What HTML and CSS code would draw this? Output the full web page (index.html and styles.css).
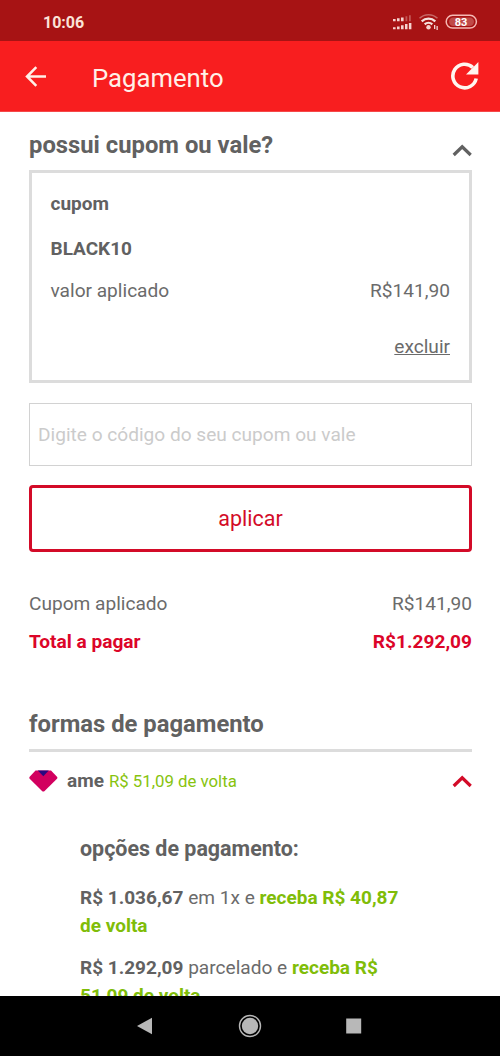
FILE: index.html
```html
<!DOCTYPE html>
<html lang="pt-BR">
<head>
<meta charset="utf-8">
<title>Pagamento</title>
<link rel="stylesheet" href="styles.css">
</head>
<body>
<div class="screen">
  <div class="status">
    <span class="time">10:06</span>
    <svg class="status-icons" width="88" height="18" viewBox="0 0 88 18">
      <g fill="#f6d3cf">
        <path d="M2 7h2.600v2.200H2zM6 6.300h2.600v2.900H6zM10 5.500h2.600v3.700H10z"/>
        <path d="M14.500 4.200h1.800v5h-1.800zM18 3.200h1.800v6H18z" opacity=".35"/>
        <path d="M2 15.200h2.600v2H2zM6 14.500h2.600v2.700H6zM10 13.200h2.600v4H10zM14 12h2.500v5.200H14zM17.900 11h2.500v6.200h-2.500z"/>
        <circle cx="37.500" cy="15.300" r="2.200"/>
        <path d="M43 13h1.300v4H43zM45.500 14h1.300v4h-1.300z"/>
      </g>
      <g fill="none" stroke="#f6e3df" stroke-width="2.200">
        <path d="M28.500 6.300a13 13 0 0 1 18 0" opacity=".4" stroke-width="1.500"/>
        <path d="M30.700 9.400a9.800 9.800 0 0 1 13.600 0"/>
        <path d="M33.700 12.400a5.500 5.500 0 0 1 7.600 0"/>
      </g>
      <rect x="55.200" y="3.300" width="30.200" height="12.800" rx="6.400" fill="#a71314" stroke="#f6b9b4" stroke-width="1.500"/>
      <rect x="58" y="5.500" width="25" height="8.500" rx="4.200" fill="#c04a48"/>
      <text class="battery" x="70" y="13.600" text-anchor="middle">83</text>
    </svg>
  </div>
  <header class="bar">
    <svg class="back" width="24" height="24" viewBox="0 0 24 24" fill="none" stroke="#fff0e8" stroke-width="2.500"><path d="M22 12.500H3.500M12.300 3.200L3 12.500l9.300 9.300"/></svg>
    <h1>Pagamento</h1>
    <svg class="reload" width="30" height="30" viewBox="0 0 30 30"><path d="M26.200 17.500A11.800 11.800 0 1 1 22.800 6.500" fill="none" stroke="#fff6f0" stroke-width="3.600"/><path d="M28.400 1v12.400H16z" fill="#fff6f0"/></svg>
  </header>
  <main>
    <div class="title-row">
      <h2>possui cupom ou vale?</h2>
      <svg class="chevron" width="20" height="14" viewBox="0 0 20 14"><path d="M1.700 12L10.200 3.800l8.500 8.200"/></svg>
    </div>
    <section class="coupon">
      <div class="line"><b>cupom</b></div>
      <div class="line code"><b>BLACK10</b></div>
      <div class="line value"><span>valor aplicado</span><span>R$141,90</span></div>
      <div class="line remove"><a>excluir</a></div>
    </section>
    <div class="field">Digite o código do seu cupom ou vale</div>
    <div class="apply">aplicar</div>
    <div class="line applied"><span>Cupom aplicado</span><span>R$141,90</span></div>
    <div class="line total"><b>Total a pagar</b><b>R$1.292,09</b></div>
    <h2 class="methods">formas de pagamento</h2>
    <div class="ame">
      <svg width="29" height="24" viewBox="0 0 29 24"><path d="M6.500 1.500h15.500l6 6.200q.8 1 0 2L15.600 22q-1.300 1.200-2.600 0L.7 9.700q-.8-1 0-2z" fill="#d2005f"/><path d="M8.800 1.500h11L14.300 7.200z" fill="#2a0880"/></svg>
      <b>ame</b><span class="cashback">R$ 51,09 de volta</span>
      <svg class="chevron red" width="20" height="14" viewBox="0 0 20 14"><path d="M1.700 12L10.200 3.800l8.500 8.200"/></svg>
    </div>
    <section class="options">
      <h3>opções de pagamento:</h3>
      <p><b>R$ 1.036,67</b> em 1x e <b class="green">receba R$ 40,87<br>de volta</b></p>
      <p><b>R$ 1.292,09</b> parcelado e <b class="green">receba R$<br>51,09 de volta</b></p>
    </section>
  </main>
  <nav class="android">
    <svg width="24" height="24" viewBox="0 0 24 24"><path d="M3 12L18 3.700v16.600z"/></svg>
    <svg width="24" height="24" viewBox="0 0 24 24"><circle cx="12" cy="12" r="8.200"/><circle cx="12" cy="12" r="10.500" fill="none" stroke="#b8b8b8" stroke-width="1.400"/></svg>
    <svg width="24" height="24" viewBox="0 0 24 24"><path d="M4.200 4.500h15v15h-15z"/></svg>
  </nav>
</div>
</body>
</html>
```
FILE: styles.css
```css
* { box-sizing: border-box; }
body { margin: 0; font-family: Roboto, sans-serif; font-size: 19.100px; color: #6b6b6b; background: #fff; }
h1, h2, h3, p { margin: 0; }
b { font-weight: 700; font-size: 19px; color: #616161; }
svg { flex: none; display: block; }
.screen { width: 500px; height: 1056px; display: flex; flex-direction: column; overflow: hidden; }
.status { height: 41px; flex: none; background: #a71314; display: flex; justify-content: space-between; padding: 12px 21px 0 43px; }
.time { font-size: 16px; line-height: 21px; font-weight: 700; color: #fbe3d8; }
.battery { font: 700 11px Roboto, sans-serif; fill: #fff; }
.bar { height: 71px; flex: none; background: #f81e1f; border-bottom: 1px solid #f5494a; display: flex; align-items: center; padding: 0 20px 0 24px; }
.bar h1 { font-size: 25.700px; line-height: 32px; font-weight: 400; color: #fff0e8; margin-left: 44px; padding-top: 3px; }
.reload { margin-left: auto; }
main { flex: 1; min-height: 0; overflow: hidden; padding: 18px 28px 0 29px; }
.title-row { display: flex; justify-content: space-between; height: 40px; }
h2 { font-size: 23.800px; line-height: 30px; font-weight: 700; color: #616161; }
.chevron { fill: none; stroke: #616161; stroke-width: 3.200; }
.title-row .chevron { margin-top: 13px; }
.red { stroke: #d30b28; margin-left: auto; }
.coupon { height: 213px; border: 3px solid #dcdcdc; padding: 19px 19px 0 18.500px; }
.line { display: flex; justify-content: space-between; line-height: 24px; height: 24px; }
.code { margin-top: 21px; }
.value { margin-top: 18px; }
.remove { margin-top: 32px; justify-content: flex-end; }
.remove a { text-decoration: underline; }
.field { margin-top: 20px; height: 63px; border: 1.500px solid #d2d2d2; padding: 0 8px; line-height: 61px; color: #cbcbcb; }
.apply { margin-top: 19px; height: 67px; border: 3px solid #d30b28; border-radius: 4px; text-align: center; line-height: 61px; font-size: 21.500px; color: #d30b28; }
.applied { margin-top: 40px; }
.total { margin-top: 14px; }
.total b { color: #dc0529; font-size: 19.100px; }
.methods { margin-top: 55px; height: 43px; border-bottom: 3px solid #dcdcdc; }
.ame { margin-top: 17px; height: 24px; line-height: 24px; display: flex; align-items: center; }
.ame b { margin-left: 9px; }
.cashback { font-size: 16.800px; color: #87c30e; margin-left: 5px; }
.options { padding: 42px 0 0 51px; }
h3 { font-size: 21.450px; line-height: 28px; color: #616161; margin-bottom: 21px; }
.options p { line-height: 28px; margin-bottom: 14px; white-space: nowrap; }
.options .green { color: #80bd08; }
.android { height: 60px; flex: none; background: #000; display: flex; justify-content: center; gap: 80px; align-items: center; fill: #b8b8b8; }
```
